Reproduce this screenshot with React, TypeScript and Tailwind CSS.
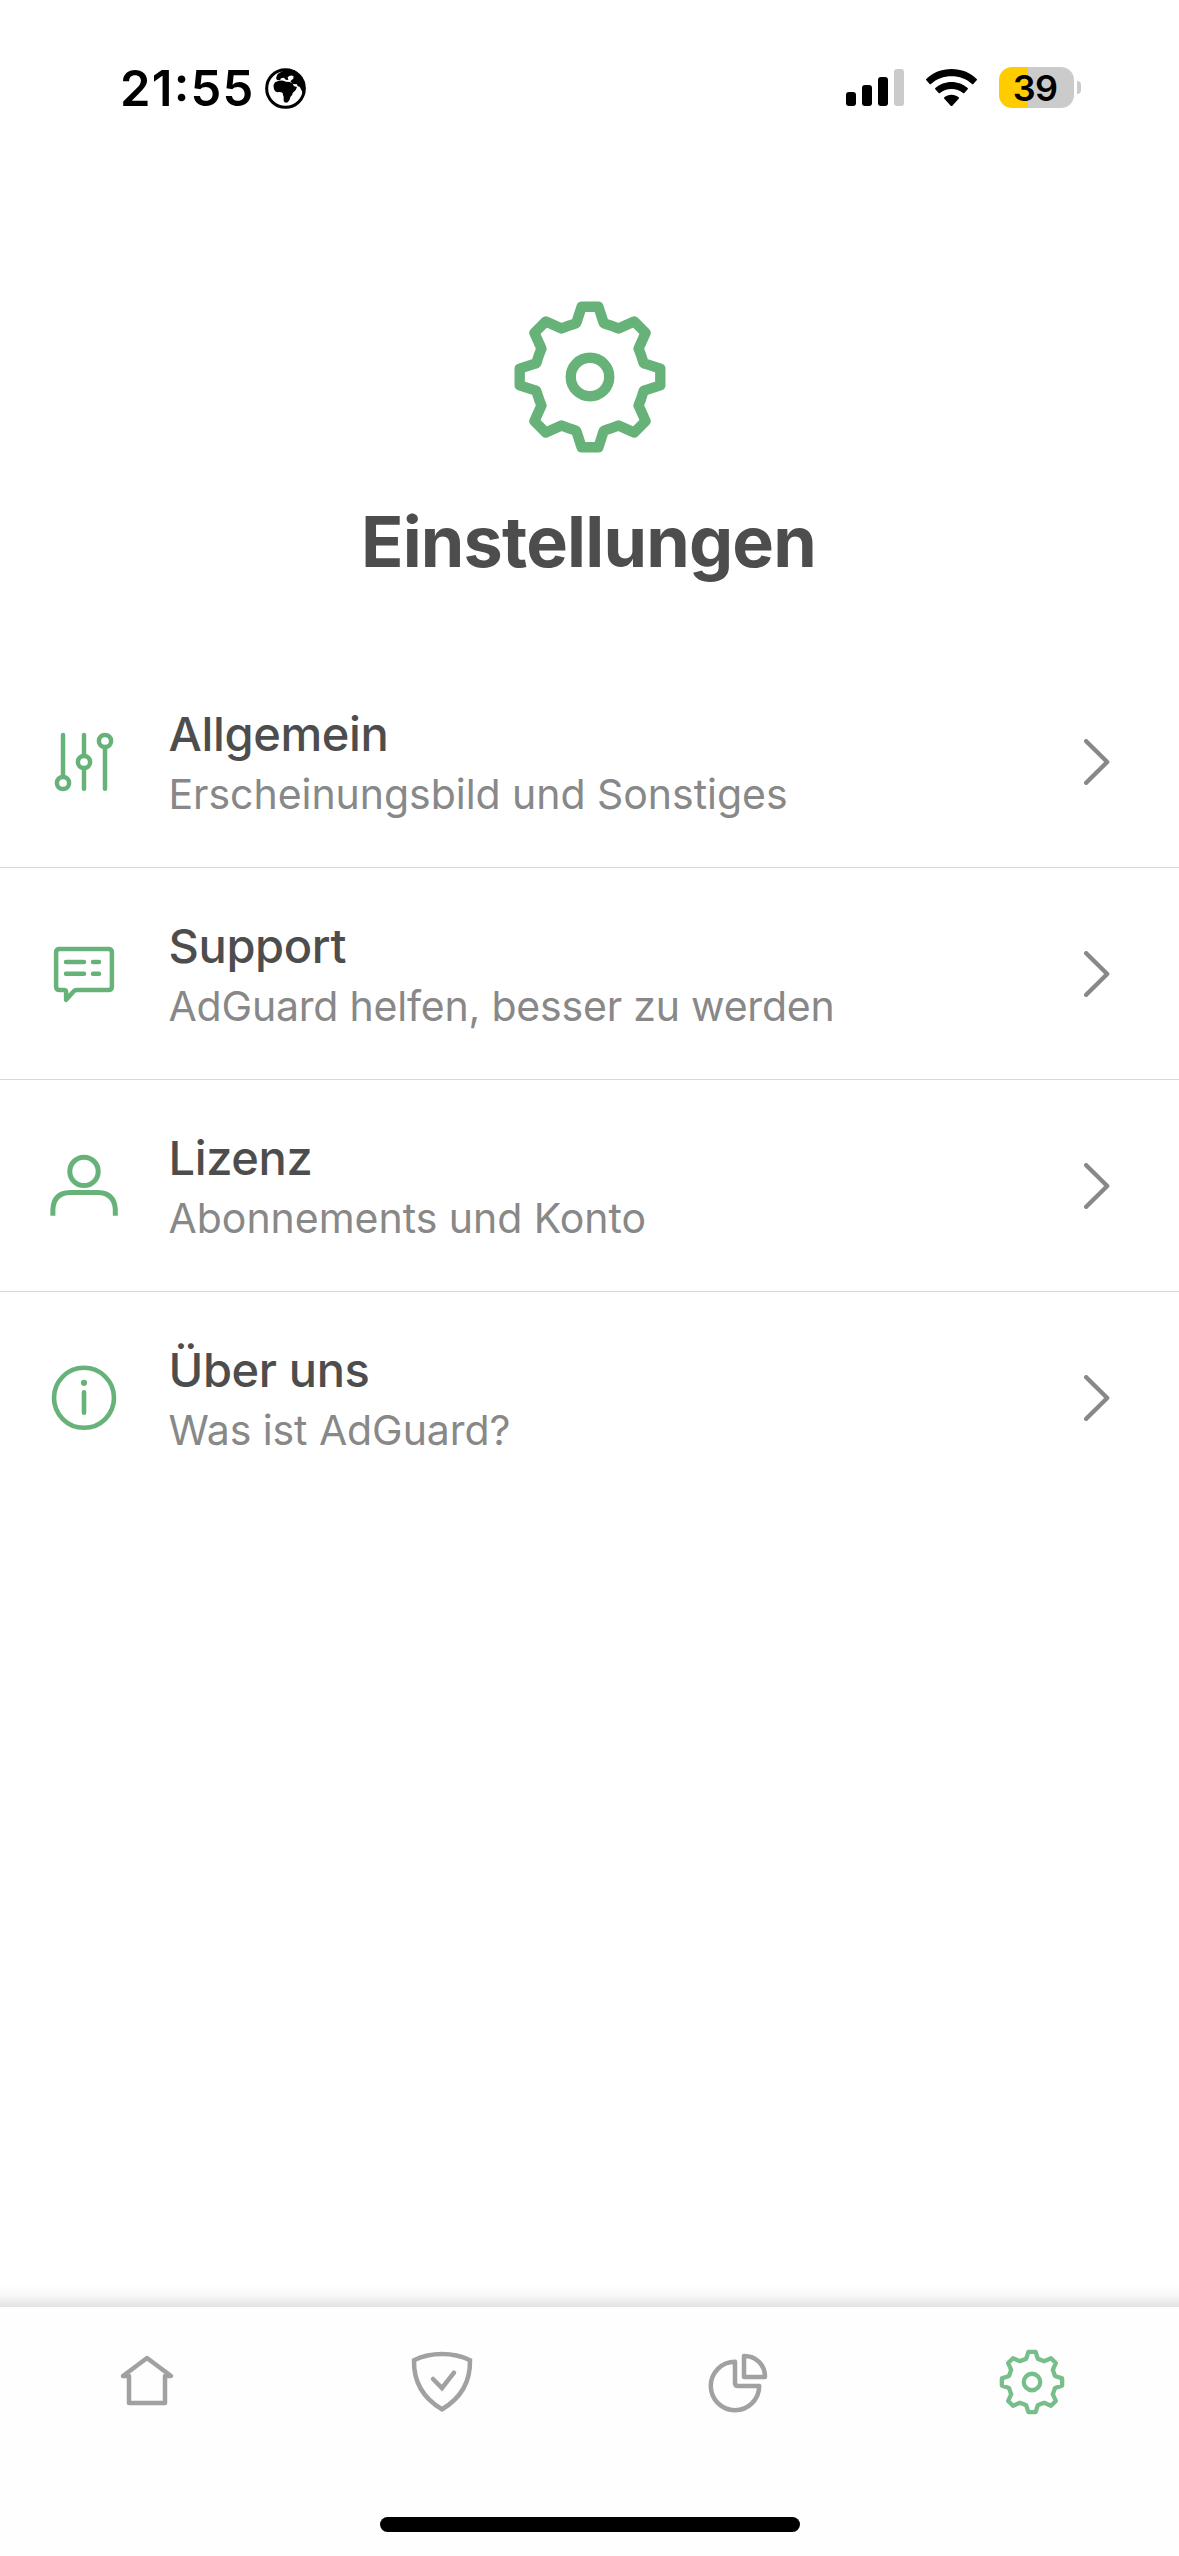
import React from "react";

type IconProps = { className?: string };

function GearIcon({ className, strokeWidth }: IconProps & { strokeWidth: number }) {
  return (
    <svg viewBox="-230 -230 460 460" className={className} fill="none" stroke="currentColor" strokeWidth={strokeWidth} strokeLinejoin="round">
      <path d="M-25-210H25L40-164Q41-160 45-159Q66-153 85-145L132-166L166-132L145-85Q153-66 159-45Q160-41 164-40L210-25V25L164 40Q160 41 159 45Q153 66 145 85L166 132L132 166L85 145Q66 153 45 159Q41 160 40 164L25 210H-25L-40 164Q-41 160-45 159Q-66 153-85 145L-132 166L-166 132L-145 85Q-153 66-159 45Q-160 41-164 40L-210 25V-25L-164-40Q-160-41-159-45Q-153-66-145-85L-166-132L-132-166L-85-145Q-66-153-45-159Q-41-160-40-164Z" />
      <circle r="57.5" />
    </svg>
  );
}

function LineIcon({ children, strokeWidth = 4.5 }: { children: React.ReactNode; strokeWidth?: number }) {
  return (
    <svg viewBox="0 0 72 72" className="size-[72px] shrink-0" fill="none" stroke="currentColor" strokeWidth={strokeWidth} strokeLinecap="round" strokeLinejoin="round">
      {children}
    </svg>
  );
}

const SlidersIcon = () => (
  <LineIcon>
    <path d="M15 9V50M36 9V29M36 43V62.8M57 22V62.8" />
    <circle cx="15" cy="57" r="6.1" />
    <circle cx="36" cy="36" r="6.1" />
    <circle cx="57" cy="15" r="6.1" />
  </LineIcon>
);

const ChatIcon = () => (
  <LineIcon>
    <path d="M11.6 11.1H60.4Q63.9 11.1 63.9 14.6V48.4Q63.9 51.9 60.4 51.9H28.5Q27 51.9 26 53L18.1 61.8V54Q18.1 51.9 16 51.9H11.6Q8.1 51.9 8.1 48.4V14.6Q8.1 11.1 11.6 11.1Z" />
    <path d="M18 24H36M45 24H51M18 35.8H36M45 35.8H51" />
  </LineIcon>
);

const UserIcon = () => (
  <svg viewBox="0 0 72 72" className="size-[72px] shrink-0" fill="none" stroke="currentColor" strokeWidth="5">
    <circle cx="36" cy="21.4" r="14.2" />
    <path d="M4.9 65.8V59Q6 43 22 42.6H50Q66 43 67.3 59V65.8" />
  </svg>
);

const InfoIcon = () => (
  <LineIcon strokeWidth={4.6}>
    <circle cx="36" cy="35.8" r="30" />
    <path d="M36 30.2V50.8" />
    <circle cx="36" cy="20.8" r="3.1" fill="currentColor" stroke="none" />
  </LineIcon>
);

const HomeIcon = () => (
  <LineIcon>
    <path d="M18 30H12L36 12L60 30H54V57H18Z" />
  </LineIcon>
);

const ShieldIcon = () => (
  <svg viewBox="0 0 72 72" className="size-[72px]" fill="none" stroke="currentColor" strokeWidth="4.5">
    <path d="M8 14.2Q21 8.1 36 8.1T64 14.2C64.5 36 55 52 36 63.3C17 52 7.5 36 8 14.2Z" />
    <path d="M27 33L36 42L48 26.7" strokeLinecap="round" />
  </svg>
);

const PieIcon = () => (
  <LineIcon>
    <path d="M34 15.8A24.2 24.2 0 1 0 58.2 40H37Q34 40 34 37Z" />
    <path d="M43 10V31H64C64 18.5 55 10 43 10Z" />
  </LineIcon>
);

const ChevronIcon = () => (
  <svg viewBox="0 0 26 46" className="h-[46px] w-[26px]" fill="none" stroke="currentColor" strokeWidth="4.4" strokeLinecap="round" strokeLinejoin="round">
    <path d="M2.2 2.2L23.2 23L2.2 43.8" />
  </svg>
);

const GlobeIcon = () => (
  <svg viewBox="0 0 123 123" className="size-[41px]">
    <circle cx="61.5" cy="61.5" r="56.5" fill="none" stroke="currentColor" strokeWidth="9" />
    <path fill="currentColor" d="M30 43Q42 36 55 38L63 41Q74 41 82 45L87 55L96 57Q95 66 83 75Q83 82 76 87Q75 98 68 103Q59 106 56 99V86Q53 80 53 75Q48 71 36 73Q27 70 26 58Q25 49 30 43Z" />
    <path fill="currentColor" d="M33 30L38 18L58 6H88L112 28L121 60L116 88L111 70L104 56L98 55L96 49L84 48L76 40L86 31L84 25L73 24L68 28L70 36L62 35L57 29L48 31L45 37L36 36Z" />
    <path fill="#fff" d="M73 24Q80 21 86 25L82 30L72 29Z" />
  </svg>
);

const WifiIcon = () => (
  <svg viewBox="0 0 153 111" className="h-[37px] w-[51px]" fill="currentColor">
    <path d="M76.5 0C106 0 133 11 152 30Q154 32 152 34L142 45Q140 47 138 45C121 30 100 22 76.5 22S32 30 15 45Q13 47 11 45L1 34Q-1 32 1 30C20 11 47 0 76.5 0Z" />
    <path d="M76.5 39C95 39 112 46 125 57Q127 59 125 61L115 72Q113 74 111 72C101 64 90 60 76.5 60S52 64 42 72Q40 74 38 72L28 61Q26 59 28 57C41 46 58 39 76.5 39Z" />
    <path d="M76.5 77C85 77 92 80 98 85Q100 87 98 89L79 110Q76.5 112 74 110L55 89Q53 87 55 85C61 80 68 77 76.5 77Z" />
  </svg>
);

const rows = [
  { title: "Allgemein", text: "Erscheinungsbild und Sonstiges", tracking: "tracking-[-0.04px]", Icon: SlidersIcon },
  { title: "Support", text: "AdGuard helfen, besser zu werden", tracking: "tracking-[-0.2px]", Icon: ChatIcon },
  { title: "Lizenz", text: "Abonnements und Konto", tracking: "tracking-[-0.02px]", Icon: UserIcon },
  { title: "Über uns", text: "Was ist AdGuard?", tracking: "tracking-[-0.08px]", Icon: InfoIcon },
];

function StatusBar() {
  return (
    <div className="flex h-[118px] items-start justify-between pr-[98px] pl-[120px] text-black">
      <div className="flex">
        <span className="mt-[59px] w-[145px] text-[49px] leading-[60px] font-semibold tracking-[1.2px] [font-feature-settings:'case']">21:55</span>
        <div className="mt-[68px]">
          <GlobeIcon />
        </div>
      </div>
      <div className="mt-[67px] flex h-[41px] items-center">
        <div className="flex h-[37px] w-[58px] items-end gap-[6px]">
          <div className="h-[14px] w-[10px] rounded-[3px] bg-black" />
          <div className="h-[21px] w-[10px] rounded-[3px] bg-black" />
          <div className="h-[29px] w-[10px] rounded-[3px] bg-black" />
          <div className="h-[37px] w-[10px] rounded-[3px] bg-[#cbcbcb]" />
        </div>
        <div className="ml-[22px]">
          <WifiIcon />
        </div>
        <div className="ml-[22px] flex h-[41px] w-[75px] items-center justify-center rounded-[13px] bg-linear-to-r from-[#ffcc00] from-[38.7%] to-[#cbcbcb] to-[38.7%] pt-px pr-[3px] text-[36px] leading-[41px] font-semibold tracking-[-0.6px]">
          39
        </div>
        <div className="ml-[3px] h-[13px] w-[4px] rounded-r-full bg-[#cbcbcb]" />
      </div>
    </div>
  );
}

export default function App() {
  return (
    <div className="flex h-[2556px] w-[1179px] flex-col bg-white font-['Inter',sans-serif]">
      <StatusBar />
      <header className="flex h-[538px] flex-col items-center pt-[182px]">
        <GearIcon className="size-[154px] text-[#67b279]" strokeWidth={31} />
        <h1 className="mt-[46px] pr-[2px] text-[70px] leading-[84px] font-bold tracking-[-0.8px] text-[#4d4d4d]">Einstellungen</h1>
      </header>
      <main className="flex-1">
        {rows.map(({ title, text, tracking, Icon }, i) => (
          <div key={title} className={`flex h-[212px] items-center border-b pr-[69px] pl-[48px] ${i < rows.length - 1 ? "border-[#d8d8d8]" : "border-transparent"}`}>
            <div className="text-[#67b279]">
              <Icon />
            </div>
            <div className="ml-[48.5px] flex-1">
              <h2 className="text-[47px] leading-[58px] font-medium tracking-[-0.37px] text-[#4d4d4d]">{title}</h2>
              <p className={`mt-[6px] text-[41px] leading-[50px] text-[#888888] ${tracking}`}>{text}</p>
            </div>
            <div className="text-[#888888]">
              <ChevronIcon />
            </div>
          </div>
        ))}
      </main>
      <div className="h-[22px] bg-linear-to-b from-white via-[#f7f7f7] to-[#e2e2e2]" />
      <nav className="flex h-[249px] flex-col justify-between bg-[#fefefe] pt-[39px] pb-[24px]">
        <div className="grid grid-cols-4 justify-items-center text-[#a1a1a1]">
          <HomeIcon />
          <ShieldIcon />
          <PieIcon />
          <div className="flex size-[72px] items-center justify-center text-[#77be8b]">
            <GearIcon className="size-[66px]" strokeWidth={30} />
          </div>
        </div>
        <div className="mx-auto h-[15px] w-[420px] rounded-full bg-black" />
      </nav>
    </div>
  );
}
